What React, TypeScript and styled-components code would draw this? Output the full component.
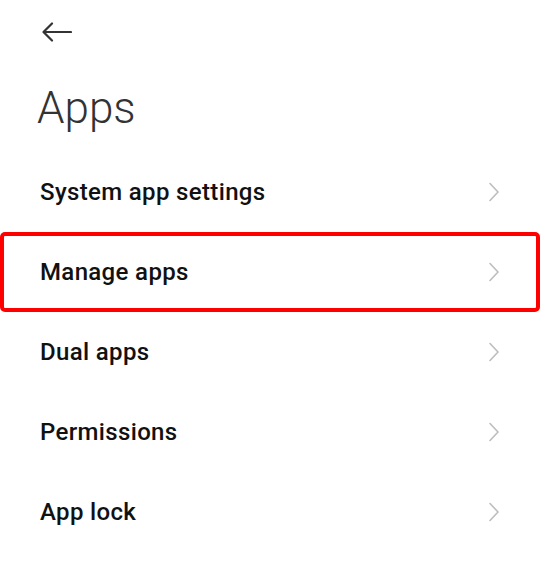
import React from "react";
import styled, { createGlobalStyle } from "styled-components";

const Global = createGlobalStyle`
  html, body { margin: 0; padding: 0; background: #ffffff; }
  body { font-family: Roboto, "Noto Sans", "Liberation Sans", sans-serif; }
`;

const Screen = styled.div`
  width: 540px;
  height: 579px;
  background: #ffffff;
  display: flex;
  flex-direction: column;
  overflow: hidden;
`;

const TopBar = styled.div`
  height: 64px;
  display: flex;
  align-items: center;
  padding-left: 42px;
`;

const BackButton = styled.button`
  border: none;
  background: none;
  padding: 0;
  display: flex;
  align-items: center;
  cursor: pointer;
`;

const Title = styled.h1`
  margin: 0;
  padding: 18px 0 0 37px;
  height: 70px;
  box-sizing: border-box;
  font-size: 44px;
  font-weight: 300;
  color: #333333;
  line-height: 52px;
`;

const List = styled.div`
  display: flex;
  flex-direction: column;
  padding-top: 18px;
`;

const Row = styled.div<{ $highlighted?: boolean }>`
  height: 80px;
  display: flex;
  align-items: center;
  justify-content: space-between;
  padding: 0 41px 0 40px;
  box-sizing: border-box;
  border-radius: 5px;
  box-shadow: ${(p) => (p.$highlighted ? "inset 0 0 0 4px #ff0000" : "none")};
`;

const Label = styled.span`
  font-size: 24px;
  font-weight: 500;
  color: #111111;
  letter-spacing: 0.35px;
`;

const Chevron = () => (
  <svg width="10" height="20" viewBox="0 0 10 20" fill="none">
    <path d="M1 1.5 L9 10 L1 18.5" stroke="#bdbdbd" strokeWidth="1.6" strokeLinecap="round" strokeLinejoin="round" />
  </svg>
);

const BackArrow = () => (
  <svg width="30" height="20" viewBox="0 0 30 20" fill="none">
    <path d="M29 10 H2 M10 1.5 L1.5 10 L10 18.5" stroke="#333333" strokeWidth="2.2" strokeLinecap="round" strokeLinejoin="round" />
  </svg>
);

const items = ["System app settings", "Manage apps", "Dual apps", "Permissions", "App lock"];

export default function App() {
  return (
    <>
      <Global />
      <Screen>
        <TopBar>
          <BackButton aria-label="Back">
            <BackArrow />
          </BackButton>
        </TopBar>
        <Title>Apps</Title>
        <List>
          {items.map((label) => (
            <Row key={label} $highlighted={label === "Manage apps"}>
              <Label>{label}</Label>
              <Chevron />
            </Row>
          ))}
        </List>
      </Screen>
    </>
  );
}
